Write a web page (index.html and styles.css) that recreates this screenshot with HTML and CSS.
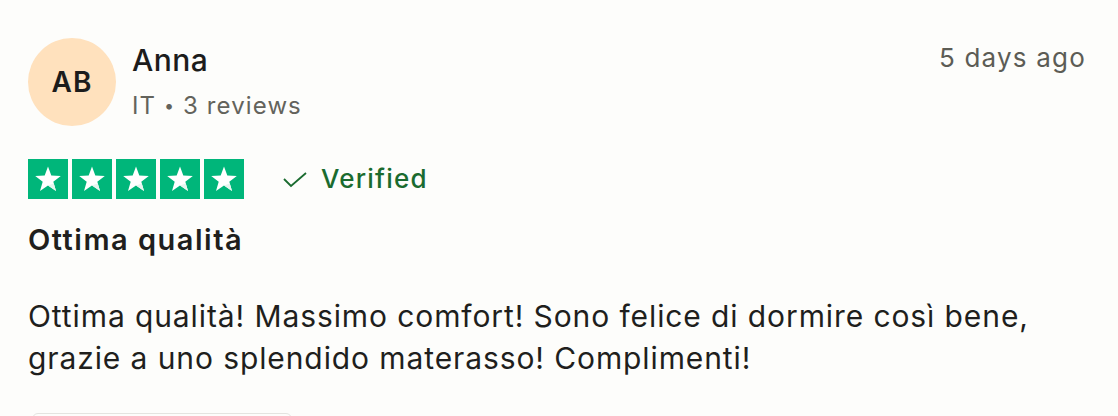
FILE: index.html
```html
<!DOCTYPE html>
<html lang="it">
<head>
<meta charset="utf-8">
<title>Review</title>
<link rel="stylesheet" href="styles.css">
</head>
<body>
<article class="review">
  <header class="review-header">
    <div class="avatar">AB</div>
    <div class="consumer">
      <div class="consumer-name">Anna</div>
      <div class="consumer-meta">IT <span class="dot">•</span> 3 reviews</div>
    </div>
    <time class="review-date">5 days ago</time>
  </header>
  <div class="rating-row">
    <div class="stars">
      <span class="star"><svg viewBox="0 0 40 40" width="40" height="40"><polygon points="20,7.5 23.3,16.6 32.8,16.9 25.3,22.8 28,32 20,26.6 12,32 14.7,22.8 7.2,16.9 16.7,16.6" fill="#fff"/><polygon points="25.3,22.8 28,32 20,26.6 25.6,24.6" fill="#e6f5ee"/></svg></span>
      <span class="star"><svg viewBox="0 0 40 40" width="40" height="40"><polygon points="20,7.5 23.3,16.6 32.8,16.9 25.3,22.8 28,32 20,26.6 12,32 14.7,22.8 7.2,16.9 16.7,16.6" fill="#fff"/><polygon points="25.3,22.8 28,32 20,26.6 25.6,24.6" fill="#e6f5ee"/></svg></span>
      <span class="star"><svg viewBox="0 0 40 40" width="40" height="40"><polygon points="20,7.5 23.3,16.6 32.8,16.9 25.3,22.8 28,32 20,26.6 12,32 14.7,22.8 7.2,16.9 16.7,16.6" fill="#fff"/><polygon points="25.3,22.8 28,32 20,26.6 25.6,24.6" fill="#e6f5ee"/></svg></span>
      <span class="star"><svg viewBox="0 0 40 40" width="40" height="40"><polygon points="20,7.5 23.3,16.6 32.8,16.9 25.3,22.8 28,32 20,26.6 12,32 14.7,22.8 7.2,16.9 16.7,16.6" fill="#fff"/><polygon points="25.3,22.8 28,32 20,26.6 25.6,24.6" fill="#e6f5ee"/></svg></span>
      <span class="star"><svg viewBox="0 0 40 40" width="40" height="40"><polygon points="20,7.5 23.3,16.6 32.8,16.9 25.3,22.8 28,32 20,26.6 12,32 14.7,22.8 7.2,16.9 16.7,16.6" fill="#fff"/><polygon points="25.3,22.8 28,32 20,26.6 25.6,24.6" fill="#e6f5ee"/></svg></span>
    </div>
    <div class="verified">
      <svg class="check" viewBox="0 0 24 16" width="24" height="16"><polyline points="1,7 8,14 23,1" fill="none" stroke="#1a6b2f" stroke-width="1.8"/></svg>
      <span>Verified</span>
    </div>
  </div>
  <h2 class="review-title">Ottima qualità</h2>
  <p class="review-text">Ottima qualità! Massimo comfort! Sono felice di dormire così bene, grazie a uno splendido materasso! Complimenti!</p>
  <div class="review-actions"></div>
</article>
</body>
</html>
```
FILE: styles.css
```css
html, body {
  margin: 0;
  padding: 0;
  background: #fdfdfb;
}
body {
  font-family: Inter, "Noto Sans", "DejaVu Sans", sans-serif;
  color: #1f1f1d;
  overflow: hidden;
}
.review {
  padding: 38px 32px 0 28px;
  height: 378px;
  overflow: hidden;
}
.review-header {
  display: flex;
  align-items: flex-start;
}
.avatar {
  width: 88px;
  height: 88px;
  border-radius: 50%;
  background: #ffe1bd;
  display: flex;
  align-items: center;
  justify-content: center;
  font-size: 28px;
  letter-spacing: 1px;
  font-weight: 600;
  color: #1c1c1c;
  flex-shrink: 0;
}
.consumer {
  margin-left: 16px;
  padding-top: 4px;
  display: flex;
  flex-direction: column;
  gap: 13px;
  flex: 1;
}
.consumer-name {
  font-size: 30px;
  line-height: 36px;
  letter-spacing: 0.5px;
  font-weight: 500;
  color: #1c1c1c;
}
.consumer-meta {
  font-size: 24px;
  line-height: 30px;
  letter-spacing: 1.1px;
  color: #63635c;
}
.dot {
  font-size: 18px;
  vertical-align: 2px;
}
.review-date {
  font-size: 26px;
  line-height: 32px;
  letter-spacing: 1.2px;
  margin-top: 4px;
  color: #5c5c55;
}
.rating-row {
  display: flex;
  align-items: center;
  margin-top: 33px;
  height: 40px;
}
.stars {
  display: flex;
  gap: 4px;
}
.star {
  width: 40px;
  height: 40px;
  background: #00b67a;
  display: block;
}
.star svg {
  display: block;
}
.verified {
  display: flex;
  align-items: center;
  margin-left: 39px;
  color: #1a6b2f;
  font-size: 26px;
  line-height: 32px;
  letter-spacing: 1.2px;
  font-weight: 500;
}
.check {
  margin-right: 14px;
  margin-top: 2px;
}
.review-title {
  margin: 24px 0 0;
  font-size: 29px;
  line-height: 34px;
  letter-spacing: 1.5px;
  font-weight: 600;
  color: #1f1f1d;
}
.review-text {
  margin: 38px 0 0;
  font-size: 30px;
  line-height: 42px;
  letter-spacing: 0.9px;
  color: #1f1f1d;
}
.review-actions {
  margin: 34px 0 0 4px;
  width: 258px;
  height: 50px;
  border: 1px solid #e4e4e0;
  border-radius: 6px;
}
```
